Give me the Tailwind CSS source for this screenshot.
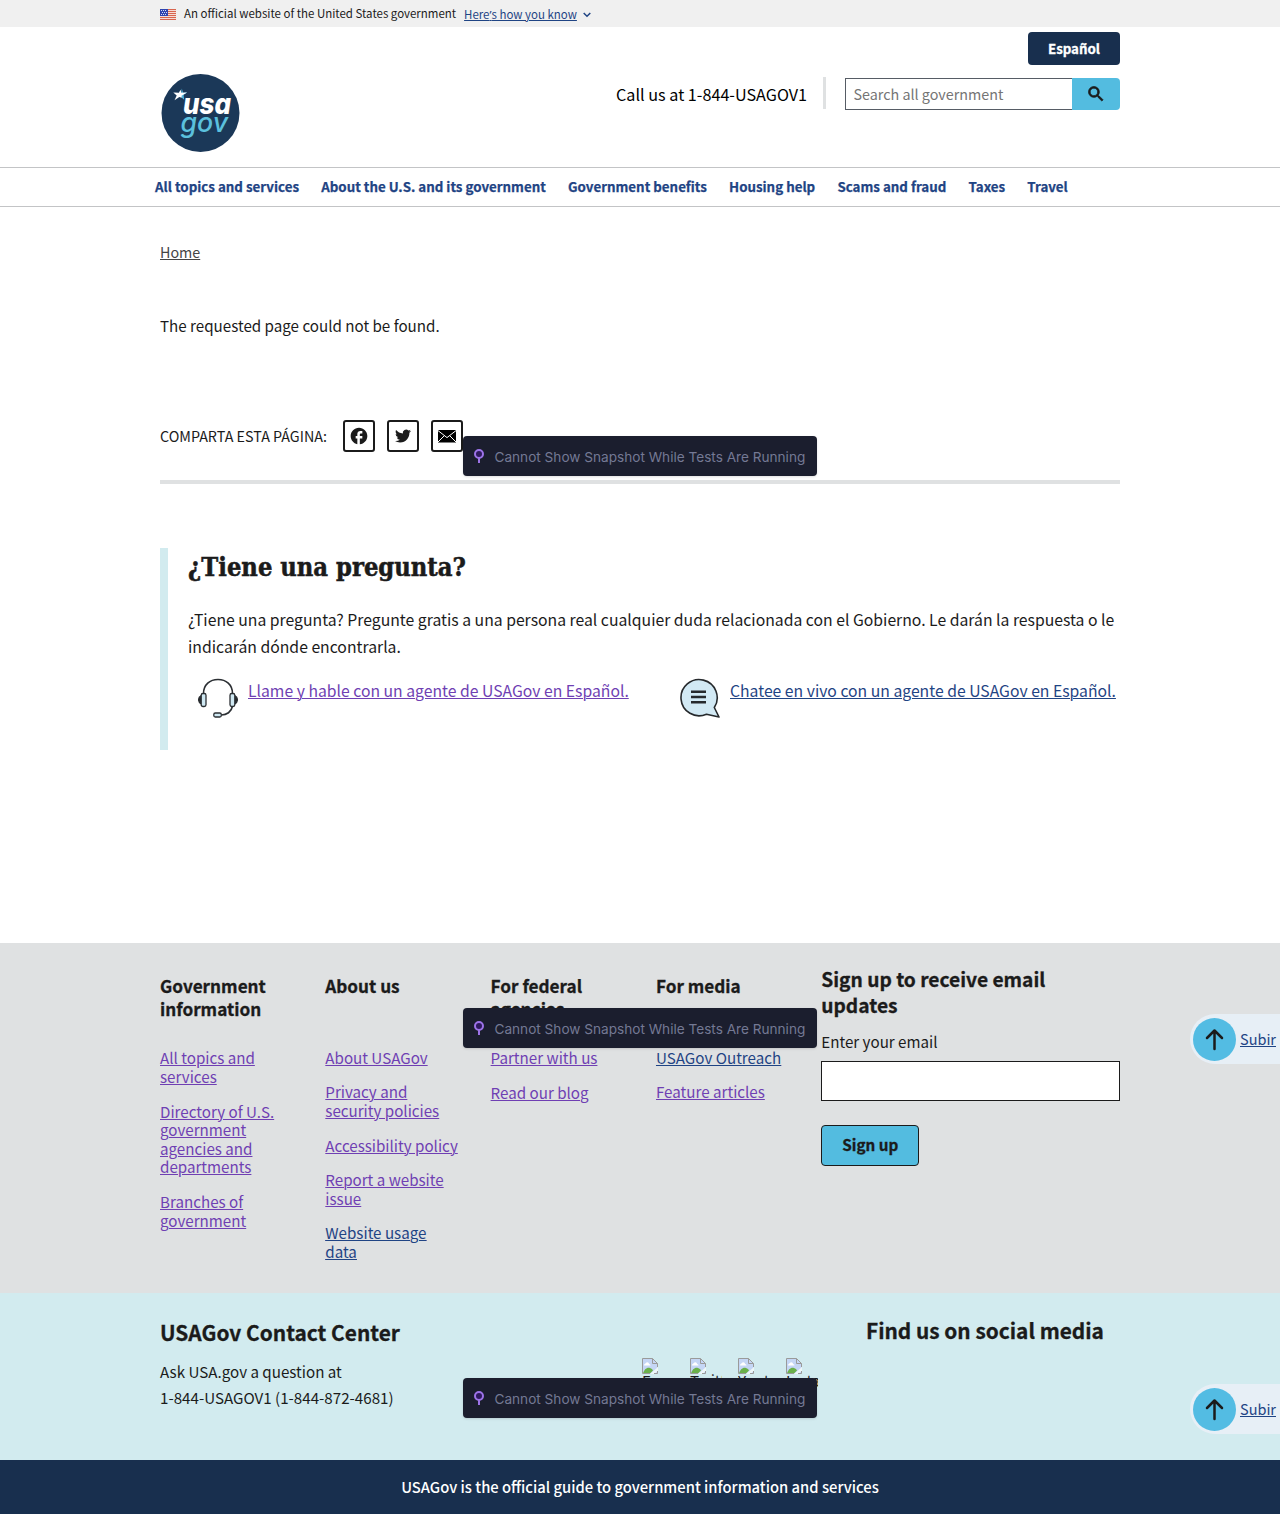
<!DOCTYPE html>
<html lang="es">
<head>
<meta charset="utf-8">
<title>USAGov</title>
<script src="https://cdn.jsdelivr.net/npm/@tailwindcss/browser@4"></script>
</head>
<body class="relative w-[1280px] h-[1514px] overflow-hidden bg-white text-[#1b1b1b] font-['Noto_Sans_CJK_SC','Noto_Sans',sans-serif] text-[15.17px] leading-[26px]">

<!-- Government banner -->
<div class="h-[27px] bg-[#f0f0f0]">
  <div class="mx-auto w-[960px] flex items-start text-[11.47px] leading-[27px]">
    <svg class="mt-[9px] mr-2 shrink-0" width="16" height="11" viewBox="0 0 16 11">
      <rect width="16" height="11" fill="#f5dcd6"/>
      <path d="M0 .5h16M0 2.5h16M0 4.5h16M0 6.5h16M0 8.5h16M0 10.5h16" stroke="#d8654f"/>
      <rect width="8" height="7" fill="#2f44b0"/>
      <path d="M1 1.5h6M2 3.5h6M1 5.5h6" stroke="#d5dbf2" stroke-dasharray="1 1"/>
    </svg>
    <span class="whitespace-nowrap">An official website of the United States government</span>
    <a class="ml-2 mt-px flex items-center whitespace-nowrap text-[#1f4484]"><span class="w-[113px] text-[11.47px] underline decoration-1 underline-offset-1">Here<span class="font-['Noto_Sans']">’</span>s how you know</span>
      <svg class="ml-[6px]" width="8" height="6" viewBox="0 0 8 6"><path d="M.7 1L4 4.3 7.3 1" fill="none" stroke="#1f4484" stroke-width="1.5"/></svg>
    </a>
  </div>
</div>

<!-- Header -->
<header class="mx-auto w-[960px] h-[140px] flex justify-between">
  <svg class="mt-[46px] ml-px" width="80" height="80" viewBox="0 0 80 80">
    <circle cx="39.5" cy="40" r="39" fill="#1b3858"/>
    <path d="M20.8 15.5l1.2 4.3 4-.4-3.4 2.4.5 5-3.3-3z" fill="#53bce3"/>
    <path d="M12.3 19.4l5.6.4 1.6-3 .8 3 5.8-.2-5.6 3.2.2 2-2.4-.9-4.8 3.3 2.2-4.6z" fill="#fff"/>
    <text x="22" y="41" font-size="28.4" font-weight="800" font-style="italic" fill="#fff" textLength="48" lengthAdjust="spacingAndGlyphs" class="font-['Inter'] [font-feature-settings:'cv11']">usa</text>
    <text x="19.5" y="59" font-size="26.5" font-weight="500" font-style="italic" fill="#5bc0de" textLength="47.500" lengthAdjust="spacingAndGlyphs" class="font-['Inter'] [font-feature-settings:'cv11']">gov</text>
  </svg>
  <div class="flex flex-col items-end">
    <a class="mt-[5px] h-[33px] w-[92px] rounded-[4px] bg-[#182f4e] text-center text-[13.3px] leading-[33px] font-bold text-white [-webkit-text-stroke:0.3px]">Español</a>
    <div class="mt-[11px] flex items-start">
      <span class="mt-[2px] text-[16.18px] leading-[32px] whitespace-nowrap text-black">Call us at 1-844-USAGOV1</span>
      <span class="ml-4 mr-[19px] mt-px h-[32px] w-[3px] bg-[#dfe1e2]"></span>
      <form class="mt-[2px] flex h-8">
        <input class="h-8 w-[227px] border border-r-0 border-[#565c65] bg-white pl-[7.5px] pr-2 pb-[2px] text-[14.34px] placeholder:text-[#757575] placeholder:opacity-100" placeholder="Search all government">
        <button type="button" class="flex h-8 w-12 items-center justify-center rounded-r-[4px] bg-[#53bce0]">
          <svg width="20" height="20" viewBox="0 0 24 24" fill="#1b1b1b" stroke="#1b1b1b" stroke-width=".9"><path d="M15.5 14h-.79l-.28-.27A6.47 6.47 0 0 0 16 9.5 6.5 6.5 0 1 0 9.5 16c1.61 0 3.09-.59 4.23-1.57l.27.28v.79l5 4.99L20.49 19l-4.99-5zm-6 0C7.01 14 5 11.99 5 9.5S7.01 5 9.5 5 14 7.01 14 9.5 11.99 14 9.5 14z"/></svg>
        </button>
      </form>
    </div>
  </div>
</header>

<!-- Primary navigation -->
<nav class="h-10 border-y border-[#c3c4c6]">
  <div class="mx-auto flex w-[970px] gap-[22.2px] text-[13.34px] leading-[38px] font-bold whitespace-nowrap text-[#1f4484] [-webkit-text-stroke:0.25px]">
    <a>All topics and services</a><a>About the U.S. and its government</a><a>Government benefits</a><a>Housing help</a><a>Scams and fraud</a><a>Taxes</a><a>Travel</a>
  </div>
</nav>

<main class="mx-auto w-[960px] h-[736px]">
  <div class="pt-8 text-[14.3px] text-[#454545]"><a class="underline decoration-1 underline-offset-1">Home</a></div>
  <p class="mt-[47px] whitespace-nowrap">The requested page could not be found.</p>
  <div class="mt-[82px] flex h-[60px] items-start gap-3 border-b-4 border-[#dfe1e2] box-content">
    <span class="mr-1 w-[167px] text-[14.32px] leading-[32px] whitespace-nowrap">COMPARTA ESTA PÁGINA:</span>
    <a class="flex size-8 items-center justify-center rounded-[3px] border-2 border-[#1b1b1b]">
      <svg class="shrink-0" width="20" height="20" viewBox="0 0 24 24" fill="#1b1b1b"><path d="M22 12c0-5.52-4.48-10-10-10S2 6.48 2 12c0 4.84 3.44 8.87 8 9.8V15H8v-3h2V9.500C10 7.570 11.570 6 13.500 6H16v3h-2c-.55 0-1 .45-1 1v2h3v3h-3v6.950c5.050-.5 9-4.760 9-9.950z"/></svg>
    </a>
    <a class="flex size-8 items-center justify-center rounded-[3px] border-2 border-[#1b1b1b]">
      <svg class="shrink-0" width="16" height="16" viewBox="0 0 24 24" fill="#1b1b1b"><path d="M23.953 4.57a10 10 0 01-2.825.775 4.958 4.958 0 002.163-2.723c-.951.555-2.005.959-3.127 1.184a4.92 4.92 0 00-8.384 4.482C7.69 8.095 4.067 6.13 1.64 3.162a4.822 4.822 0 00-.666 2.475c0 1.71.87 3.213 2.188 4.096a4.904 4.904 0 01-2.228-.616v.06a4.923 4.923 0 003.946 4.827 4.996 4.996 0 01-2.212.085 4.936 4.936 0 004.604 3.417 9.867 9.867 0 01-6.102 2.105c-.39 0-.779-.023-1.17-.067a13.995 13.995 0 007.557 2.209c9.053 0 13.998-7.496 13.998-13.985 0-.21 0-.42-.015-.63A9.935 9.935 0 0024 4.59z"/></svg>
    </a>
    <a class="flex size-8 items-center justify-center rounded-[3px] border-2 border-[#1b1b1b]">
      <svg class="shrink-0" width="18" height="13" viewBox="0 0 18 13"><rect width="18" height="12.500" fill="#000"/><path d="M0 .6l9 7 9-7M0 12l6.300-6.300M18 12l-6.300-6.300" fill="none" stroke="#fff" stroke-width="1"/></svg>
    </a>
  </div>

  <section class="mt-16 h-[202px] border-l-8 border-[#d2ebef] pl-5">
    <h2 class="pt-[3px] font-['DejaVu_Serif_Condensed','DejaVu_Serif',serif] font-bold text-[25.29px] leading-[32px] [font-stretch:condensed] whitespace-nowrap [-webkit-text-stroke:0.5px]">¿Tiene una pregunta?</h2>
    <p class="mt-[23px] text-[15.75px] leading-[27px] whitespace-nowrap">¿Tiene una pregunta? Pregunte gratis a una persona real cualquier duda relacionada con el Gobierno. Le darán la respuesta o le<br>indicarán dónde encontrarla.</p>
    <div class="mt-[17px] flex pl-[10px] text-[15.74px] leading-[27px] whitespace-nowrap">
      <div class="flex w-[482px] gap-[10px]">
        <svg class="mt-px" width="40" height="41" viewBox="0 0 40 41" fill="none" stroke="#2b2f33" stroke-width="1.600">
          <path d="M5.500 15.500C5.500 6.500 12 1.500 20 1.500s14.500 5 14.500 14"/>
          <path d="M34.500 28c-1 6-6 9-11 9"/>
          <path d="M3 18c-3 1.500-3 6 0 7.500zM37 18c3 1.500 3 6 0 7.500z" fill="#1b1b1b"/>
          <rect x="3.200" y="15.500" width="4.800" height="13" rx="1.800" fill="#cfe8f2" stroke-width="1.300"/>
          <rect x="32" y="15.500" width="4.800" height="13" rx="1.800" fill="#cfe8f2" stroke-width="1.300"/>
          <rect x="15.800" y="35" width="7.500" height="4" rx="1.500" fill="#cfe8f2" stroke-width="1.300"/>
        </svg>
        <a class="text-[#6f3fb3] underline decoration-1 underline-offset-1">Llame y hable con un agente de USAGov en Español.</a>
      </div>
      <div class="flex gap-[10px]">
        <svg class="mt-px" width="40" height="41" viewBox="0 0 40 41" fill="#d2e9f4" stroke="#26292c" stroke-width="1.600" stroke-linejoin="round">
          <path d="M34.300 29.500A18.100 18.100 0 1 0 26.500 36.200L39 39z"/>
          <path d="M11 13.800h15M11 19h15M11 24.200h15" stroke-width="2.400"/>
        </svg>
        <a class="text-[#1f4484] underline decoration-1 underline-offset-1">Chatee en vivo con un agente de USAGov en Español.</a>
      </div>
    </div>
  </section>
</main>

<!-- Footer links -->
<div class="h-[350px] bg-[#dfe1e2]">
  <div class="mx-auto grid w-[960px] grid-cols-[165.3px_165.3px_165.4px_165.3px_1fr] text-[15.17px] leading-[18.66px] whitespace-nowrap">
    <section class="pt-[31px]">
      <h3 class="h-[74.2px] text-[17.17px] leading-[23px] font-bold [-webkit-text-stroke:0.3px]">Government<br>information</h3>
      <ul class="flex flex-col gap-[16px] text-[#6f3fb3] underline decoration-1 underline-offset-1">
        <li>All topics and<br>services</li>
        <li>Directory of U.S.<br>government<br>agencies and<br>departments</li>
        <li>Branches of<br>government</li>
      </ul>
    </section>
    <section class="pt-[31px]">
      <h3 class="h-[74px] text-[17.17px] leading-[23px] font-bold [-webkit-text-stroke:0.3px]">About us</h3>
      <ul class="flex flex-col gap-[15.8px] text-[#6f3fb3] underline decoration-1 underline-offset-1">
        <li>About USAGov</li>
        <li>Privacy and<br>security policies</li>
        <li>Accessibility policy</li>
        <li>Report a website<br>issue</li>
        <li class="text-[#1f4484] underline decoration-1 underline-offset-1">Website usage<br>data</li>
      </ul>
    </section>
    <section class="pt-[31px]">
      <h3 class="h-[74px] text-[17.17px] leading-[23px] font-bold [-webkit-text-stroke:0.3px]">For federal<br>agencies</h3>
      <ul class="flex flex-col gap-[16.4px] text-[#6f3fb3] underline decoration-1 underline-offset-1">
        <li>Partner with us</li>
        <li>Read our blog</li>
      </ul>
    </section>
    <section class="pt-[31px]">
      <h3 class="h-[74px] text-[17.17px] leading-[23px] font-bold [-webkit-text-stroke:0.3px]">For media</h3>
      <ul class="flex flex-col gap-[15.8px] text-[#6f3fb3] underline decoration-1 underline-offset-1">
        <li class="text-[#1f4484] underline decoration-1 underline-offset-1">USAGov Outreach</li>
        <li>Feature articles</li>
      </ul>
    </section>
    <section class="flex flex-col items-start pt-[23px]">
      <h3 class="text-[19.19px] leading-[26px] font-bold [-webkit-text-stroke:0.3px]">Sign up to receive email<br>updates</h3>
      <label class="mt-[10px] leading-[26px]">Enter your email</label>
      <input class="mt-[7px] h-10 w-full border border-[#1b1b1b] bg-white px-2">
      <button type="button" class="mt-6 h-[41px] w-[98px] rounded-[4px] border border-[#1b1b1b] bg-[#53bce0] pb-[2px] text-[15.24px] font-bold [-webkit-text-stroke:0.3px]">Sign up</button>
    </section>
  </div>
</div>

<!-- Contact and social -->
<div class="h-[167px] bg-[#d2ebef]">
  <div class="mx-auto flex w-[960px] whitespace-nowrap">
    <div class="w-[482px] pt-[26px]">
      <h3 class="text-[20.87px] leading-[26px] font-bold [-webkit-text-stroke:0.3px]">USAGov Contact Center</h3>
      <p class="mt-[13px]">Ask USA.gov a question at<br>1-844-USAGOV1 (1-844-872-4681)</p>
    </div>
    <div class="w-[478px] pt-[24px]">
      <h3 class="pl-[224px] text-[20.84px] leading-[26px] font-bold [-webkit-text-stroke:0.3px]">Find us on social media</h3>
      <div id="social" class="mt-[15px] flex gap-4 text-[15.17px] leading-[13px]"></div>
    </div>
  </div>
</div>

<footer class="h-[54px] bg-[#182f4e] text-center text-[14.79px] leading-[53px] font-medium text-white">USAGov is the official guide to government information and services</footer>

<!-- Back-to-top pills -->
<a class="absolute right-0 top-[1014px] flex h-[50px] w-[90px] items-center rounded-l-full bg-[#e7eff6] pl-[3px] text-[14.49px] text-[#1f4484]">
  <svg class="mr-1 shrink-0" width="43" height="44" viewBox="0 0 43 44"><circle cx="21.500" cy="22.500" r="21.500" fill="#53bce3"/><path d="M21.500 32V14M14 21l7.500-7.500L29 21" fill="none" stroke="#1b1b1b" stroke-width="2.500" stroke-linecap="round" stroke-linejoin="round"/></svg>
  <span class="underline decoration-1 underline-offset-1">Subir</span>
</a>
<a class="absolute right-0 top-[1384px] flex h-[50px] w-[90px] items-center rounded-l-full bg-[#e7eff6] pl-[3px] text-[14.49px] text-[#1f4484]">
  <svg class="mr-1 shrink-0" width="43" height="44" viewBox="0 0 43 44"><circle cx="21.500" cy="22.500" r="21.500" fill="#53bce3"/><path d="M21.500 32V14M14 21l7.500-7.500L29 21" fill="none" stroke="#1b1b1b" stroke-width="2.500" stroke-linecap="round" stroke-linejoin="round"/></svg>
  <span class="underline decoration-1 underline-offset-1">Subir</span>
</a>

<!-- Test-runner snapshot notices -->
<div class="absolute left-[463px] top-[436px] flex h-10 w-[354px] items-center rounded-[4px] bg-[#1b1e2e] pl-[11px] font-['Inter',sans-serif] text-[13.62px] whitespace-nowrap text-[#747994] shadow-sm">
  <svg class="mr-[10.5px] shrink-0" width="10" height="16" viewBox="0 0 10 16" fill="none" stroke="#9d73e8" stroke-width="2"><path d="M5 9.500V15"/><circle cx="5" cy="6" r="4" fill="#2f1a5e"/></svg><span class="pt-[2px]">Cannot Show Snapshot While Tests Are Running</span>
</div>
<div class="absolute left-[463px] top-[1008px] flex h-10 w-[354px] items-center rounded-[4px] bg-[#1b1e2e] pl-[11px] font-['Inter',sans-serif] text-[13.62px] whitespace-nowrap text-[#747994] shadow-sm">
  <svg class="mr-[10.5px] shrink-0" width="10" height="16" viewBox="0 0 10 16" fill="none" stroke="#9d73e8" stroke-width="2"><path d="M5 9.500V15"/><circle cx="5" cy="6" r="4" fill="#2f1a5e"/></svg><span class="pt-[2px]">Cannot Show Snapshot While Tests Are Running</span>
</div>
<div class="absolute left-[463px] top-[1378px] flex h-10 w-[354px] items-center rounded-[4px] bg-[#1b1e2e] pl-[11px] font-['Inter',sans-serif] text-[13.62px] whitespace-nowrap text-[#747994] shadow-sm">
  <svg class="mr-[10.5px] shrink-0" width="10" height="16" viewBox="0 0 10 16" fill="none" stroke="#9d73e8" stroke-width="2"><path d="M5 9.500V15"/><circle cx="5" cy="6" r="4" fill="#2f1a5e"/></svg><span class="pt-[2px]">Cannot Show Snapshot While Tests Are Running</span>
</div>

<script>
  // Social links: missing-image placeholder with clipped alternative text
  document.getElementById('social').innerHTML = ['Facebook', 'Twitter', 'Youtube', 'Instagram'].map(name => `
    <a class="block h-8 w-8 overflow-hidden">
      <svg class="block" width="16" height="16" viewBox="0 0 16 16">
        <path d="M.5.500h10l5 5v10H.500z" fill="#c5d6f5"/>
        <path d="M2 7.500c0-2 2-2 2.500-3 1.500-.5 2.500.5 2.500 1.500 1 0 1.500.8 1.500 1.500z" fill="#fff"/>
        <path d="M1 15.500c1-4 4-6.500 7-5.500 1.500.5 2.500 1.500 3 2.500l-3 3z" fill="#6ab04a"/>
        <path d="M8 16l8-7v3.500L12.500 16z" fill="#eef7f8"/>
        <path d="M8 15.500H.500V.500h10l5 5V9M15.500 13v2.500H12M10.500.500v5h5" fill="none" stroke="#9a9a9a"/>
      </svg>${name}
    </a>`).join('');
</script>
</body>
</html>
